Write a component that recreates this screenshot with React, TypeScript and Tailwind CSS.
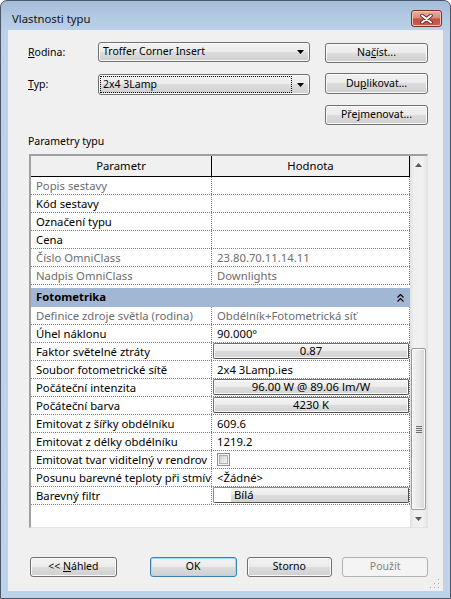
import React from 'react';

type Row = {
  name: string;
  value?: string;
  gray?: boolean;
  kind?: 'text' | 'button' | 'check' | 'color';
};

const identityRows: Row[] = [
  { name: 'Popis sestavy', gray: true },
  { name: 'Kód sestavy' },
  { name: 'Označení typu' },
  { name: 'Cena' },
  { name: 'Číslo OmniClass', value: '23.80.70.11.14.11', gray: true },
  { name: 'Nadpis OmniClass', value: 'Downlights', gray: true },
];

const photometryRows: Row[] = [
  { name: 'Definice zdroje světla (rodina)', value: 'Obdélník+Fotometrická síť', gray: true },
  { name: 'Úhel náklonu', value: '90.000°' },
  { name: 'Faktor světelné ztráty', value: '0.87', kind: 'button' },
  { name: 'Soubor fotometrické sítě', value: '2x4 3Lamp.ies' },
  { name: 'Počáteční intenzita', value: '96.00 W @ 89.06 lm/W', kind: 'button' },
  { name: 'Počáteční barva', value: '4230 K', kind: 'button' },
  { name: 'Emitovat z šířky obdélníku', value: '609.6' },
  { name: 'Emitovat z délky obdélníku', value: '1219.2' },
  { name: 'Emitovat tvar viditelný v rendrov', kind: 'check' },
  { name: 'Posunu barevné teploty při stmív', value: '<Žádné>' },
  { name: 'Barevný filtr', value: 'Bílá', kind: 'color' },
];

// win7 style push button
function WinButton({
  children,
  className = '',
  variant = 'normal',
}: {
  children: React.ReactNode;
  className?: string;
  variant?: 'normal' | 'default' | 'disabled';
}) {
  const look =
    variant === 'default'
      ? 'border-[#3c7fb1] bg-[linear-gradient(to_bottom,#f2f2f2_0%,#ebebeb_50%,#dddddd_50%,#cfcfcf_100%)] shadow-[inset_0_0_0_1px_#9fdcf7] text-black'
      : variant === 'disabled'
        ? 'border-[#adb2b5] bg-[#f4f4f4] text-[#838383]'
        : 'border-[#707070] bg-[linear-gradient(to_bottom,#f2f2f2_0%,#ebebeb_50%,#dddddd_50%,#cfcfcf_100%)] shadow-[inset_0_0_0_1px_#fbfbfb] text-black';
  return (
    <div className={`flex items-center justify-center rounded-[3px] border text-[10.5px] ${look} ${className}`}>
      {children}
    </div>
  );
}

function ComboArrow() {
  return (
    <svg width="7" height="4" viewBox="0 0 7 4" className="shrink-0">
      <path d="M0 0H7L3.5 4Z" fill="#000" />
    </svg>
  );
}

function Combo({ text, focused = false, className = '' }: { text: string; focused?: boolean; className?: string }) {
  return (
    <div
      className={`flex w-[212px] items-center rounded-[3px] border border-[#707070] bg-[linear-gradient(to_bottom,#f2f2f2_0%,#ebebeb_50%,#dddddd_50%,#cfcfcf_100%)] shadow-[inset_0_0_0_1px_#fbfbfb] p-[1px] pr-[5px] text-[10.5px] ${className}`}
    >
      <div
        className={`flex h-full w-[192px] items-center pl-[2px] ${focused ? 'border border-dotted border-black' : 'border border-transparent'}`}
      >
        {text}
      </div>
      <div className="ml-auto flex items-center">
        <ComboArrow />
      </div>
    </div>
  );
}

function Checkbox() {
  return (
    <div className="ml-[5px] mt-[2px] h-[13px] w-[13px] border border-[#8e8f8f] bg-[#f4f4f4] p-[1px]">
      <div className="h-full w-full border border-[#aeb1b3] bg-[linear-gradient(135deg,#cbcfd5,#f6f6f6)]" />
    </div>
  );
}

function CellButton({ children }: { children: React.ReactNode }) {
  return (
    <div className="flex h-[16px] w-[196px] items-center justify-center rounded-[2px] border border-[#707070] border-b-[#505050] border-r-[#505050] bg-[linear-gradient(to_bottom,#f4f4f4_0%,#ebebeb_50%,#dddddd_50%,#d3d3d3_100%)] shadow-[inset_0_0_0_1px_#fbfbfb] leading-none">
      {children}
    </div>
  );
}

function GridRow({ row }: { row: Row }) {
  const tone = row.gray ? 'text-[#6d6d6d]' : 'text-black';
  return (
    <div className="flex h-[18px] border-b border-dotted border-[#808080]">
      <div
        className={`w-[181px] shrink-0 overflow-hidden whitespace-nowrap border-r border-dotted border-[#808080] pl-[5px] leading-[17px] ${tone}`}
      >
        {row.name}
      </div>
      <div className={`w-[198px] shrink-0 overflow-hidden whitespace-nowrap border-r border-dotted border-[#808080] ${tone}`}>
        {row.kind === 'button' && (
          <div className="pl-[1px]">
            <CellButton>{row.value}</CellButton>
          </div>
        )}
        {row.kind === 'color' && (
          <div className="pl-[1px]">
            <div className="flex h-[16px] w-[196px] items-center rounded-[2px] border border-[#8a8a8a] border-b-[#505050] border-r-[#505050] bg-[linear-gradient(to_bottom,#f4f4f4_0%,#ebebeb_50%,#dddddd_50%,#d3d3d3_100%)] leading-none">
              <div className="h-full w-[17px] bg-white" />
              <span className="ml-[3px]">{row.value}</span>
            </div>
          </div>
        )}
        {row.kind === 'check' && <Checkbox />}
        {(!row.kind || row.kind === 'text') && <div className="pl-[5px] leading-[17px]">{row.value}</div>}
      </div>
    </div>
  );
}

function ScrollArrow({ up }: { up?: boolean }) {
  return (
    <svg width="7" height="4" viewBox="0 0 7 4">
      {up ? <path d="M0 4H7L3.5 0Z" fill="#5a5a5a" /> : <path d="M0 0H7L3.5 4Z" fill="#5a5a5a" />}
    </svg>
  );
}

function PropertyGrid() {
  return (
    <div className="ml-[1px] flex h-[374px] w-[399px] border-b border-l-2 border-r border-t-2 border-b-[#e3e3e3] border-l-[#a0a0a0] border-r-[#e3e3e3] border-t-[#a0a0a0] bg-white text-[11.3px]">
      <div className="flex w-[379px] flex-col">
        <div className="flex h-[21px] border-b border-black bg-[#f0f0f0]">
          <div className="w-[181px] border-r border-black text-center leading-[20px]">Parametr</div>
          <div className="w-[198px] border-r border-black text-center leading-[20px]">Hodnota</div>
        </div>
        {identityRows.map((r) => (
          <GridRow key={r.name} row={r} />
        ))}
        <div className="h-[22px] pt-[3px]">
          <div className="flex h-[19px] items-center bg-[#a1b7d3] pl-[5px] pr-[6px]">
            <span className="font-bold">Fotometrika</span>
            <svg width="7" height="8" viewBox="0 0 7 8" className="ml-auto">
              <path d="M0.5 3.5L3.5 0.5L6.5 3.5M0.5 7.5L3.5 4.5L6.5 7.5" fill="none" stroke="#000" strokeWidth="1.2" />
            </svg>
          </div>
        </div>
        {photometryRows.map((r) => (
          <GridRow key={r.name} row={r} />
        ))}
      </div>
      {/* scrollbar */}
      <div className="flex w-[17px] flex-col bg-[linear-gradient(to_right,#e2e2e2,#f0f0f0_25%,#f0f0f0_75%,#e6e6e6)]">
        <div className="flex h-[17px] items-center justify-center">
          <ScrollArrow up />
        </div>
        <div className="h-[175px]" />
        <div className="mx-[1px] flex h-[162px] items-center justify-center rounded-[2px] border border-[#9b9b9b] bg-[linear-gradient(to_right,#f4f4f4,#e8e8e8_50%,#d6d6d6)] shadow-[inset_0_0_0_1px_#fafafa]">
          <div className="flex flex-col gap-[1px]">
            <div className="h-[1px] w-[6px] bg-[#6e6e6e]" />
            <div className="h-[1px] w-[6px] bg-[#6e6e6e]" />
            <div className="h-[1px] w-[6px] bg-[#6e6e6e]" />
            <div className="h-[1px] w-[6px] bg-[#6e6e6e]" />
          </div>
        </div>
        <div className="flex h-[17px] items-center justify-center">
          <ScrollArrow />
        </div>
      </div>
    </div>
  );
}

function CloseButton() {
  return (
    <div className="flex h-[17px] w-[31px] items-center justify-center rounded-[3px] border border-[#7b3027] bg-[linear-gradient(to_bottom,#eab0a3_0%,#d98a7b_45%,#c5503f_55%,#c9604c_100%)] shadow-[inset_0_0_0_1px_#f0c6bd]">
      <svg width="13" height="10" viewBox="0 0 13 10">
        <path d="M2 1.5L11 8.5M11 1.5L2 8.5" stroke="#5c2a24" strokeWidth="3.6" strokeLinecap="round" />
        <path d="M2 1.5L11 8.5M11 1.5L2 8.5" stroke="#ffffff" strokeWidth="2" strokeLinecap="round" />
      </svg>
    </div>
  );
}

function ResizeGrip() {
  const dots = [
    [8, 0],
    [4, 4],
    [8, 4],
    [0, 8],
    [4, 8],
    [8, 8],
  ];
  return (
    <svg width="10" height="10" viewBox="0 0 10 10" className="absolute bottom-[2px] right-[3px]">
      {dots.map(([x, y]) => (
        <g key={`${x}-${y}`}>
          <rect x={x + 1} y={y + 1} width="1" height="1" fill="#ffffff" />
          <rect x={x} y={y} width="1" height="1" fill="#a8a8a8" />
        </g>
      ))}
    </svg>
  );
}

export default function App() {
  return (
    <div className="h-[599px] w-[451px] bg-white font-['Noto_Sans',sans-serif] text-[10.5px] text-black">
      <div className="flex h-[599px] w-[451px] flex-col rounded-t-[7px] border border-[#4b5666] bg-[linear-gradient(to_bottom,#a3bcd9_0px,#b4cbe4_18px,#bcd2ea_32px,#bdd3ea_100%)]">
        {/* title bar */}
        <div className="flex h-[29px] items-start">
          <div className="ml-[11px] mt-[10px] text-[11.3px] leading-[16px] text-[#141414]">Vlastnosti typu</div>
          <div className="ml-auto mr-[8px] mt-[9px]">
            <CloseButton />
          </div>
        </div>

        {/* client */}
        <div className="relative mx-[7px] flex h-[561px] flex-col bg-[#f0f0f0] pl-[20px] pr-[15px] pt-[12px]">
          <div className="flex h-[22px] items-start">
            <div className="w-[70px] leading-[20px]">
              <span className="underline">R</span>odina:
            </div>
            <Combo text="Troffer Corner Insert" className="h-[20px]" />
            <WinButton className="ml-[15px] mt-[1px] h-[20px] w-[103px]">
              <span>
                Na<span className="underline">č</span>íst...
              </span>
            </WinButton>
          </div>
          <div className="mt-[9px] flex h-[22px] items-start">
            <div className="w-[70px] pt-[1px] leading-[21px]">
              <span className="underline">T</span>yp:
            </div>
            <Combo text="2x4 3Lamp" focused className="mt-[1px] h-[21px]" />
            <WinButton className="ml-[15px] h-[21px] w-[103px]">
              <span>
                Du<span className="underline">p</span>likovat...
              </span>
            </WinButton>
          </div>
          <div className="mt-[10px] flex">
            <WinButton className="ml-auto h-[20px] w-[103px]">
              <span>
                Pře<span className="underline">j</span>menovat...
              </span>
            </WinButton>
          </div>

          <div className="mt-[8px] leading-[16px]">Parametry typu</div>
          <div className="mt-[5px]">
            <PropertyGrid />
          </div>

          <div className="mt-[29px] flex">
            <WinButton className="ml-[2px] h-[20px] w-[87px]">
              <span>
                &lt;&lt; <span className="underline">N</span>áhled
              </span>
            </WinButton>
            <WinButton variant="default" className="ml-[33px] h-[20px] w-[87px]">
              OK
            </WinButton>
            <WinButton className="ml-[10px] h-[20px] w-[86px]">Storno</WinButton>
            <WinButton variant="disabled" className="ml-[10px] h-[20px] w-[86px]">
              Použít
            </WinButton>
          </div>
          <ResizeGrip />
        </div>
      </div>
    </div>
  );
}
